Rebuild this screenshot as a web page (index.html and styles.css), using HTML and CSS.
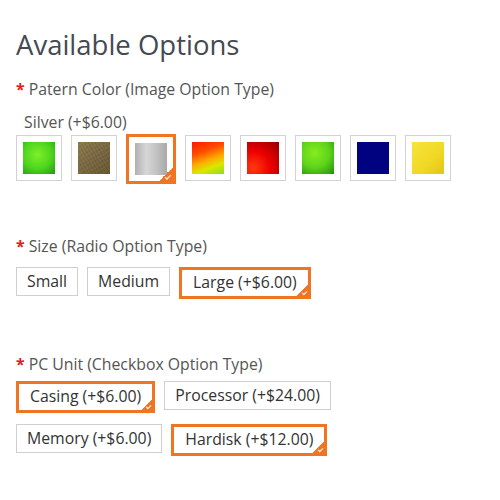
FILE: index.html
```html
<!DOCTYPE html>
<html>
<head>
<meta charset="utf-8">
<link rel="stylesheet" href="styles.css">
</head>
<body>
<div class="page">
  <h1 class="title">Available Options</h1>

  <div class="option option-image">
    <div class="label"><span class="req">*</span> Patern Color (Image Option Type)</div>
    <div class="current">Silver (+$6.00)</div>
    <div class="swatches">
      <div class="swatch"><div class="img sw-green"></div></div>
      <div class="swatch"><div class="img sw-bronze"></div></div>
      <div class="swatch selected"><div class="img sw-silver"></div><span class="tick"></span></div>
      <div class="swatch"><div class="img sw-heat"></div></div>
      <div class="swatch"><div class="img sw-red"></div></div>
      <div class="swatch"><div class="img sw-green2"></div></div>
      <div class="swatch"><div class="img sw-navy"></div></div>
      <div class="swatch"><div class="img sw-yellow"></div></div>
    </div>
  </div>

  <div class="option option-radio">
    <div class="label"><span class="req">*</span> Size (Radio Option Type)</div>
    <div class="buttons">
      <div class="btn">Small</div>
      <div class="btn">Medium</div>
      <div class="btn selected">Large (+$6.00)<span class="tick"></span></div>
    </div>
  </div>

  <div class="option option-check">
    <div class="label"><span class="req">*</span> PC Unit (Checkbox Option Type)</div>
    <div class="buttons">
      <div class="btn selected">Casing (+$6.00)<span class="tick"></span></div>
      <div class="btn">Processor (+$24.00)</div>
      <div class="btn">Memory (+$6.00)</div>
      <div class="btn selected">Hardisk (+$12.00)<span class="tick"></span></div>
    </div>
  </div>
</div>
</body>
</html>
```

FILE: styles.css
```css
html, body {
  margin: 0;
  padding: 0;
  background: #ffffff;
}

.page {
  font-family: "Open Sans", "Liberation Sans", sans-serif;
  padding: 27px 16px 0 16px;
  color: #333;
}

.title {
  margin: 0;
  font-size: 27.5px;
  line-height: 36px;
  font-weight: 400;
  color: #444a52;
}

.label {
  font-size: 15.8px;
  line-height: 20px;
  color: #555;
}

.req {
  color: #e02020;
  font-weight: 700;
}

.option-image {
  margin-top: 16px;
}

.current {
  margin-top: 13px;
  padding-left: 8px;
  font-size: 15.8px;
  line-height: 20px;
  color: #555;
}

.swatches {
  display: flex;
  align-items: flex-start;
  gap: 9px;
  margin-top: 3px;
}

.swatch {
  position: relative;
  width: 32px;
  height: 32px;
  padding: 6px;
  border: 1px solid #d2d2d2;
  background: #fff;
}

.swatch.selected {
  border: 3px solid #f07522;
  margin-top: -1px;
}

.img {
  width: 32px;
  height: 32px;
}

.sw-green {
  background: radial-gradient(circle at 45% 40%, #7cf02a 0%, #4ed41c 55%, #1f9a12 100%);
}
.sw-bronze {
  background:
    repeating-linear-gradient(60deg, rgba(0,0,0,0.07) 0 1px, transparent 1px 3px),
    repeating-linear-gradient(-30deg, rgba(255,255,255,0.05) 0 1px, transparent 1px 4px),
    linear-gradient(135deg, #8c7a4e 0%, #7a6842 50%, #67562f 100%);
}
.sw-silver {
  background: linear-gradient(90deg, #b0b0b0 0%, #d6d6d6 35%, #c4c4c4 65%, #a9a9a9 100%);
}
.sw-heat {
  background: linear-gradient(160deg, #ff1a00 0%, #ff4a00 30%, #ffa800 55%, #d8e800 75%, #8fdc20 100%);
}
.sw-red {
  background: radial-gradient(circle at 20% 80%, #ff3a10 0%, #ee0000 45%, #b40000 80%, #8a0000 100%);
}
.sw-green2 {
  background: radial-gradient(circle at 40% 35%, #86ec1e 0%, #60d41a 50%, #1e9010 100%);
}
.sw-navy {
  background: #01027f;
}
.sw-yellow {
  background: linear-gradient(135deg, #f6e43a 0%, #f0d824 60%, #e4c414 100%);
}

.tick {
  position: absolute;
  right: 0;
  bottom: 0;
  width: 14px;
  height: 14px;
  background: linear-gradient(135deg, transparent 50%, #f07522 50%);
}
.tick::after {
  content: "";
  position: absolute;
  right: 2px;
  bottom: 3px;
  width: 5px;
  height: 2px;
  border-left: 1.5px solid #fff;
  border-bottom: 1.5px solid #fff;
  transform: rotate(-45deg);
}

.option-radio {
  margin-top: 52px;
}

.option-check {
  margin-top: 55px;
}

.buttons {
  display: flex;
  flex-wrap: wrap;
  align-items: flex-start;
  gap: 11px 9px;
  margin-top: 11px;
  max-width: 440px;
}

.option-check .buttons {
  margin-top: 7px;
}

.btn {
  position: relative;
  font-size: 15.8px;
  line-height: 21px;
  padding: 3px 10px;
  border: 1px solid #cfcfcf;
  color: #333;
  background: #fff;
}

.btn.selected {
  border: 3px solid #f07522;
  padding: 2px 11px 3px 11px;
}

.btn .tick {
  width: 11px;
  height: 11px;
}
.btn .tick::after {
  right: 1px;
  bottom: 2px;
  width: 4px;
  height: 2px;
}
```
